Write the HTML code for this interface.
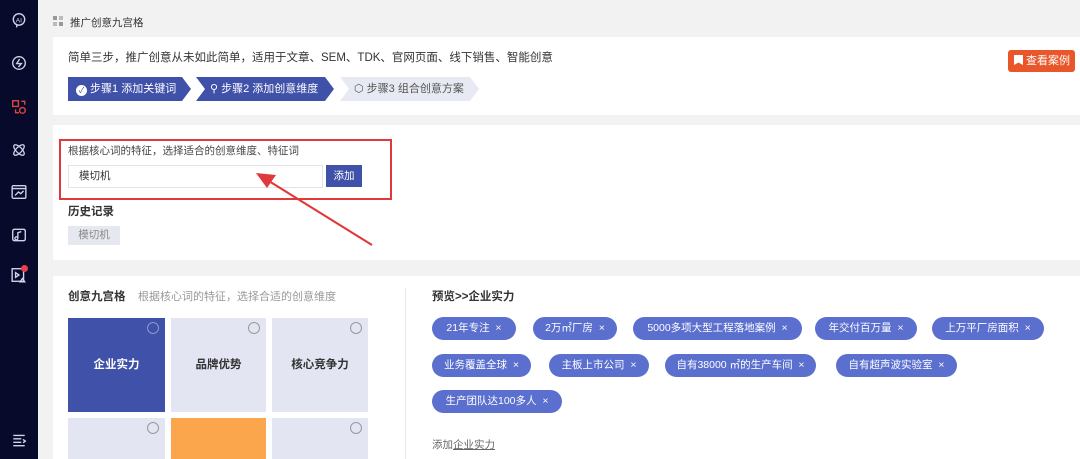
<!DOCTYPE html>
<html><head><meta charset="utf-8"><style>
*{margin:0;padding:0;box-sizing:border-box}
body{width:1080px;height:459px;overflow:hidden;background:#f2f2f2;font-family:"Liberation Sans","Noto Sans CJK SC",sans-serif;font-size:11px;color:#333;position:relative}
.abs{position:absolute}
.side{left:0;top:0;width:38px;height:459px;background:#080a2c}
.ic{position:absolute;left:11px;width:16px;height:16px}
.card{background:#fff;position:absolute;left:53px;right:0}
.step{position:absolute;top:77px;height:24px;color:#fff;font-size:11px;line-height:24px;clip-path:polygon(0 0,calc(100% - 9px) 0,100% 50%,calc(100% - 9px) 100%,0 100%,9px 50%)}
.tag{position:absolute;height:23px;border-radius:12px;background:#5b6fcf;color:#fff;font-size:10.5px;line-height:23px;text-align:center}
.cell{position:absolute;background:#e3e6f2;font-size:11.5px;font-weight:bold;text-align:center;color:#333}
.rad{position:absolute;right:6px;top:4px;width:12px;height:12px;border:1px solid #999;border-radius:50%}
</style></head><body>
<div class="abs side">
<svg class="ic" style="top:12px" viewBox="0 0 14 14" fill="none" stroke="#cfd3e8" stroke-width="1.2"><circle cx="7" cy="6.5" r="5"/><text x="4" y="9" font-size="6" fill="#cfd3e8" stroke="none">AI</text><path d="M5 11.5v2"/></svg>
<svg class="ic" style="top:55px" viewBox="0 0 14 14" fill="none" stroke="#cfd3e8" stroke-width="1.2"><circle cx="7" cy="7" r="5.5"/><path d="M7.5 3.5L5 7.5h4L6.5 10.5"/></svg>
<svg class="ic" style="top:99px" viewBox="0 0 14 14" fill="none" stroke="#e0463c" stroke-width="1.2"><rect x="1.5" y="1.5" width="5" height="5"/><circle cx="10" cy="10" r="2.5"/><path d="M9 2h3v3M4 9v3h3"/></svg>
<svg class="ic" style="top:142px" viewBox="0 0 14 14" fill="none" stroke="#cfd3e8" stroke-width="1.1"><ellipse cx="7" cy="7" rx="6" ry="2.5" transform="rotate(45 7 7)"/><ellipse cx="7" cy="7" rx="6" ry="2.5" transform="rotate(-45 7 7)"/></svg>
<svg class="ic" style="top:184px" viewBox="0 0 14 14" fill="none" stroke="#cfd3e8" stroke-width="1.2"><rect x="1" y="1.5" width="12" height="11" rx="1"/><path d="M1 4h12M3.5 10l3-3 2 1.5 2.5-2.5"/></svg>
<svg class="ic" style="top:227px" viewBox="0 0 14 14" fill="none" stroke="#cfd3e8" stroke-width="1.2"><rect x="1.5" y="2" width="11" height="10" rx="1.5"/><path d="M6 10a1.3 1.3 0 1 1 0-.1V5l3-1"/></svg>
<svg class="ic" style="top:267px" viewBox="0 0 14 14" fill="none" stroke="#cfd3e8" stroke-width="1.2"><rect x="1" y="1.5" width="10" height="11"/><path d="M4 5l3 2-3 2z"/><path d="M8 13l2-3 2 3z"/></svg>
<div class="abs" style="left:21px;top:265px;width:7px;height:7px;border-radius:50%;background:#e9404a"></div>
<svg class="ic" style="top:432px" viewBox="0 0 14 14" fill="none" stroke="#cfd3e8" stroke-width="1.2"><path d="M2 3h10M2 6h7M2 9h7M2 12h10M10.5 6.5l2 1.5-2 1.5"/></svg>
</div>
<svg class="abs" style="left:53px;top:16px" width="11" height="11" viewBox="0 0 11 11" fill="#999"><rect x="0" y="0" width="4" height="4"/><rect x="6" y="0" width="4" height="4" fill="#bbb"/><rect x="0" y="6" width="4" height="4" fill="#bbb"/><rect x="6" y="6" width="4" height="4"/></svg>
<div class="abs" style="left:70px;top:15px;font-size:10.5px;color:#333">推广创意九宫格</div>

<div class="card" style="top:37px;height:78px"></div>
<div class="abs" style="left:68px;top:49px;font-size:11.5px;color:#333">简单三步，推广创意从未如此简单，适用于文章、SEM、TDK、官网页面、线下销售、智能创意</div>
<div class="step" style="left:68px;width:123px;background:#3f51a8;clip-path:polygon(0 0,calc(100% - 9px) 0,100% 50%,calc(100% - 9px) 100%,0 100%);padding-left:8px"><span style="display:inline-block;width:11px;height:11px;border-radius:50%;background:#fff;color:#3f51a8;font-size:8px;line-height:11px;text-align:center;vertical-align:-1px">✓</span> 步骤1 添加关键词</div>
<div class="step" style="left:196px;width:138px;background:#3f51a8;padding-left:14px">⚲ 步骤2 添加创意维度</div>
<div class="step" style="left:340px;width:139px;background:#e8eaf3;color:#555;padding-left:14px">⬡ 步骤3 组合创意方案</div>
<div class="abs" style="left:1008px;top:50px;width:67px;height:22px;background:#e8562a;border-radius:3px;color:#fff;font-size:11px;line-height:22px;padding-left:6px"><span style="display:inline-block;width:9px;height:10px;background:#fff;vertical-align:-1px;clip-path:polygon(0 0,100% 0,100% 100%,50% 75%,0 100%)"></span> 查看案例</div>

<div class="card" style="top:125px;height:135px"></div>
<div class="abs" style="left:59px;top:139px;width:333px;height:61px;border:2px solid #e0393c"></div>
<div class="abs" style="left:68px;top:143px;font-size:10.5px;color:#444">根据核心词的特征，选择适合的创意维度、特征词</div>
<div class="abs" style="left:68px;top:165px;width:255px;height:23px;border:1px solid #e4e4e4;background:#fff;font-size:10.5px;line-height:21px;padding-left:10px;color:#333">模切机</div>
<div class="abs" style="left:326px;top:165px;width:36px;height:22px;background:#3f51a8;color:#fff;font-size:10.5px;line-height:22px;text-align:center">添加</div>
<div class="abs" style="left:68px;top:203px;font-size:11.5px;font-weight:bold;color:#333">历史记录</div>
<div class="abs" style="left:68px;top:226px;width:52px;height:19px;background:#e6e8f0;color:#888;font-size:10.5px;line-height:19px;text-align:center">模切机</div>
<svg class="abs" style="left:250px;top:168px" width="130" height="82"><line x1="122" y1="77" x2="14" y2="10" stroke="#e0393c" stroke-width="2.2"/><polygon points="6,5 26,7 17,20" fill="#e0393c"/></svg>

<div class="card" style="top:276px;height:183px"></div>
<div class="abs" style="left:68px;top:288px;font-size:11.5px;font-weight:bold;color:#333">创意九宫格</div>
<div class="abs" style="left:138px;top:288px;font-size:11px;color:#999">根据核心词的特征，选择合适的创意维度</div>
<div class="abs" style="left:405px;top:288px;width:1px;height:171px;background:#e6e6e6"></div>
<div class="cell" style="left:68px;top:318px;width:97px;height:94px;line-height:94px;background:#3f51a8;color:#fff">企业实力<div class="rad" style="border-color:#8d98cc;top:4px"></div></div>
<div class="cell" style="left:171px;top:318px;width:95px;height:94px;line-height:94px">品牌优势<div class="rad"></div></div>
<div class="cell" style="left:272px;top:318px;width:96px;height:94px;line-height:94px">核心竞争力<div class="rad"></div></div>
<div class="cell" style="left:68px;top:418px;width:97px;height:41px"><div class="rad"></div></div>
<div class="cell" style="left:171px;top:418px;width:95px;height:41px;background:#fba54c"></div>
<div class="cell" style="left:272px;top:418px;width:96px;height:41px"><div class="rad"></div></div>

<div class="abs" style="left:432px;top:288px;font-size:11.5px;font-weight:bold;color:#333">预览&gt;&gt;企业实力</div>
<div class="tag" style="left:432px;top:317px;width:84px">21年专注 &nbsp;×</div>
<div class="tag" style="left:533px;top:317px;width:84px">2万㎡厂房 &nbsp;×</div>
<div class="tag" style="left:633px;top:317px;width:169px">5000多项大型工程落地案例 &nbsp;×</div>
<div class="tag" style="left:815px;top:317px;width:102px">年交付百万量 &nbsp;×</div>
<div class="tag" style="left:932px;top:317px;width:112px">上万平厂房面积 &nbsp;×</div>
<div class="tag" style="left:432px;top:354px;width:99px">业务覆盖全球 &nbsp;×</div>
<div class="tag" style="left:549px;top:354px;width:100px">主板上市公司 &nbsp;×</div>
<div class="tag" style="left:665px;top:354px;width:151px">自有38000 ㎡的生产车间 &nbsp;×</div>
<div class="tag" style="left:836px;top:354px;width:121px">自有超声波实验室 &nbsp;×</div>
<div class="tag" style="left:432px;top:390px;width:130px">生产团队达100多人 &nbsp;×</div>
<div class="abs" style="left:432px;top:437px;font-size:10.5px;color:#666">添加<span style="text-decoration:underline">企业实力</span></div>
</body></html>
